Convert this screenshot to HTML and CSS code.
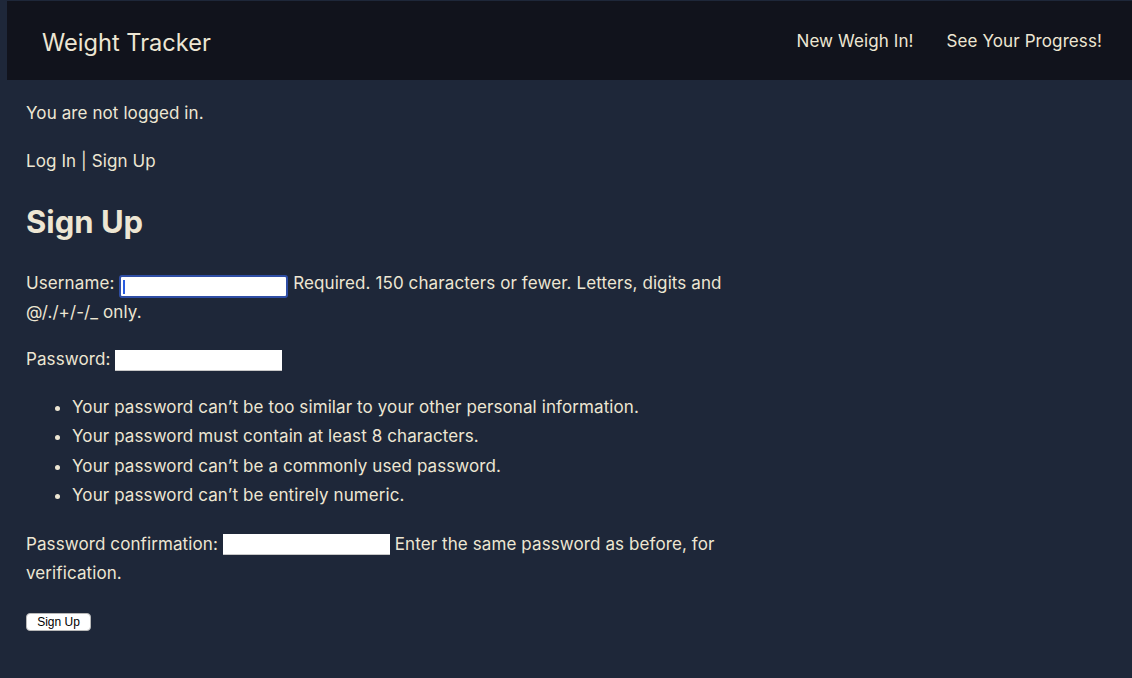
FILE: index.html
```html
<!DOCTYPE html>
<html lang="en">
<head>
<meta charset="utf-8">
<title>Weight Tracker</title>
<link rel="stylesheet" href="styles.css">
</head>
<body>
<header class="topbar">
  <a class="brand" href="#">Weight Tracker</a>
  <nav class="nav">
    <a href="#">New Weigh In!</a>
    <a href="#">See Your Progress!</a>
  </nav>
</header>
<main class="content">
  <p>You are not logged in.</p>
  <p><a href="#">Log In</a> | <a href="#">Sign Up</a></p>
  <h1>Sign Up</h1>
  <form class="form">
    <p class="first">Username: <span class="field focused"><input type="text" class="input"><span class="caret"></span></span> <span class="help">Required. 150 characters or fewer. Letters, digits and @/./+/-/_ only.</span></p>
    <p>Password: <span class="field"><input type="password" class="input"></span></p>
    <ul class="rules">
      <li>Your password can’t be too similar to your other personal information.</li>
      <li>Your password must contain at least 8 characters.</li>
      <li>Your password can’t be a commonly used password.</li>
      <li>Your password can’t be entirely numeric.</li>
    </ul>
    <p>Password confirmation: <span class="field"><input type="password" class="input"></span> <span class="help">Enter the same password as before, for verification.</span></p>
    <p class="actions"><button type="button" class="btn">Sign Up</button></p>
  </form>
</main>
</body>
</html>
```

FILE: styles.css
```css
html, body {
  margin: 0;
  padding: 0;
  background: #1e2739;
}
body {
  padding: 1px 0 0 7px;
  color: #ede6d3;
  font-family: Inter, "Noto Sans", sans-serif;
  font-size: 17px;
  line-height: 29px;
  letter-spacing: 0.1px;
  min-height: 677px;
}
a {
  color: inherit;
  text-decoration: none;
}
.topbar {
  background: #11131c;
  height: 79px;
  display: flex;
  align-items: center;
  justify-content: space-between;
  padding: 0 30px 0 35px;
}
.brand {
  font-size: 23.6px;
  letter-spacing: 0;
  line-height: 30px;
  margin-top: 4px;
}
.nav {
  display: flex;
  gap: 33px;
  font-size: 17px;
  margin-top: 2px;
}
.content {
  padding: 19px 19px 0 19px;
  max-width: 740px;
}
.content p {
  margin: 0 0 19px;
}
.content p.first {
  margin-bottom: 18px;
}
h1 {
  font-size: 31px;
  line-height: 40px;
  font-weight: 700;
  letter-spacing: 0;
  margin: 26px 0 27px;
}
.field {
  position: relative;
  display: inline-block;
  vertical-align: 1px;
}
.field.focused {
  vertical-align: -2px;
}
.input {
  display: block;
  width: 167px;
  height: 21px;
  box-sizing: border-box;
  border: none;
  border-bottom: 1px solid #c8c8c8;
  background: #fff;
  padding: 0 3px;
  margin: 0;
  font-size: 13px;
}
.focused .input {
  width: 169px;
  height: 23px;
  border: 2px solid #2f4ea5;
  border-radius: 3px;
}
.caret {
  position: absolute;
  left: 4px;
  top: 5px;
  width: 2px;
  height: 14px;
  background: #2a5de0;
}
.rules {
  margin: 0 0 19px;
  padding-left: 46px;
}
.rules li {
  line-height: 29.4px;
}
.actions {
  line-height: 20px;
  padding-top: 3px;
}
.btn {
  font-family: "Liberation Sans", Arial, sans-serif;
  font-size: 12px;
  line-height: 14px;
  letter-spacing: 0;
  color: #000;
  background: #fff;
  border: 1px solid #b8b8b8;
  border-radius: 4px;
  padding: 1px 7px;
  width: 65px;
  height: 18px;
}
```
